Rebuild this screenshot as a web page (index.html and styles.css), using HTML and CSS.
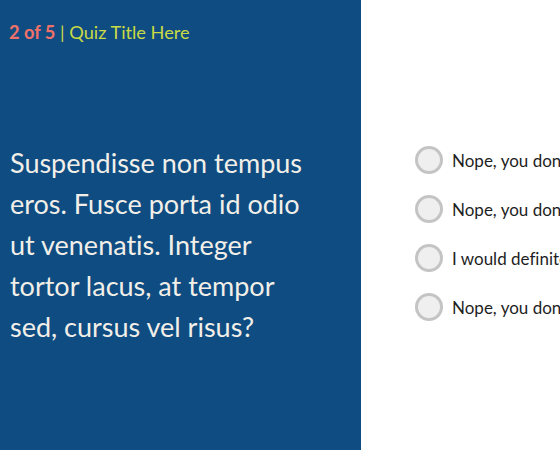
FILE: index.html
```html
<!DOCTYPE html>
<html>
<head>
<meta charset="utf-8">
<link rel="stylesheet" href="styles.css">
</head>
<body>
<div class="quiz">
  <section class="panel">
    <div class="meta"><span class="count">2 of 5</span> <span class="title">| Quiz Title Here</span></div>
    <p class="question">Suspendisse non tempus eros. Fusce porta id odio ut venenatis. Integer tortor lacus, at tempor sed, cursus vel risus?</p>
  </section>
  <section class="answers">
    <label class="option"><span class="radio"></span><span class="text">Nope, you don't want to pick this one</span></label>
    <label class="option"><span class="radio"></span><span class="text">Nope, you don't want to pick this one</span></label>
    <label class="option"><span class="radio"></span><span class="text">I would definitely pick this one</span></label>
    <label class="option"><span class="radio"></span><span class="text">Nope, you don't want to pick this one</span></label>
  </section>
</div>
</body>
</html>
```
FILE: styles.css
```css
html, body {
  margin: 0;
  padding: 0;
  background: #ffffff;
  font-family: Lato, "Open Sans", sans-serif;
  font-variant-ligatures: none;
}
.quiz {
  display: flex;
  width: 560px;
  height: 450px;
  overflow: hidden;
}
.panel {
  flex: 0 0 361px;
  background: #0f4c81;
  box-sizing: border-box;
  padding: 21px 0 0 10px;
}
.meta {
  font-size: 18.2px;
  line-height: 22px;
  margin-left: -1px;
}
.count {
  color: #f0716a;
  font-weight: 700;
}
.title {
  color: #c8da44;
}
.question {
  margin: 99px 0 0 0;
  width: 310px;
  color: #f2efe9;
  font-size: 27px;
  line-height: 41px;
}
.answers {
  flex: 1;
  display: flex;
  flex-direction: column;
  gap: 21px;
  padding: 146px 0 0 54px;
  min-width: 0;
}
.option {
  display: flex;
  align-items: center;
  gap: 9px;
  height: 28px;
  white-space: nowrap;
}
.radio {
  flex: 0 0 28px;
  width: 28px;
  height: 28px;
  box-sizing: border-box;
  border: 3px solid #c4c4c4;
  border-radius: 50%;
  background: #efefef;
}
.text {
  font-size: 17px;
  color: #1e1e1e;
}
```
